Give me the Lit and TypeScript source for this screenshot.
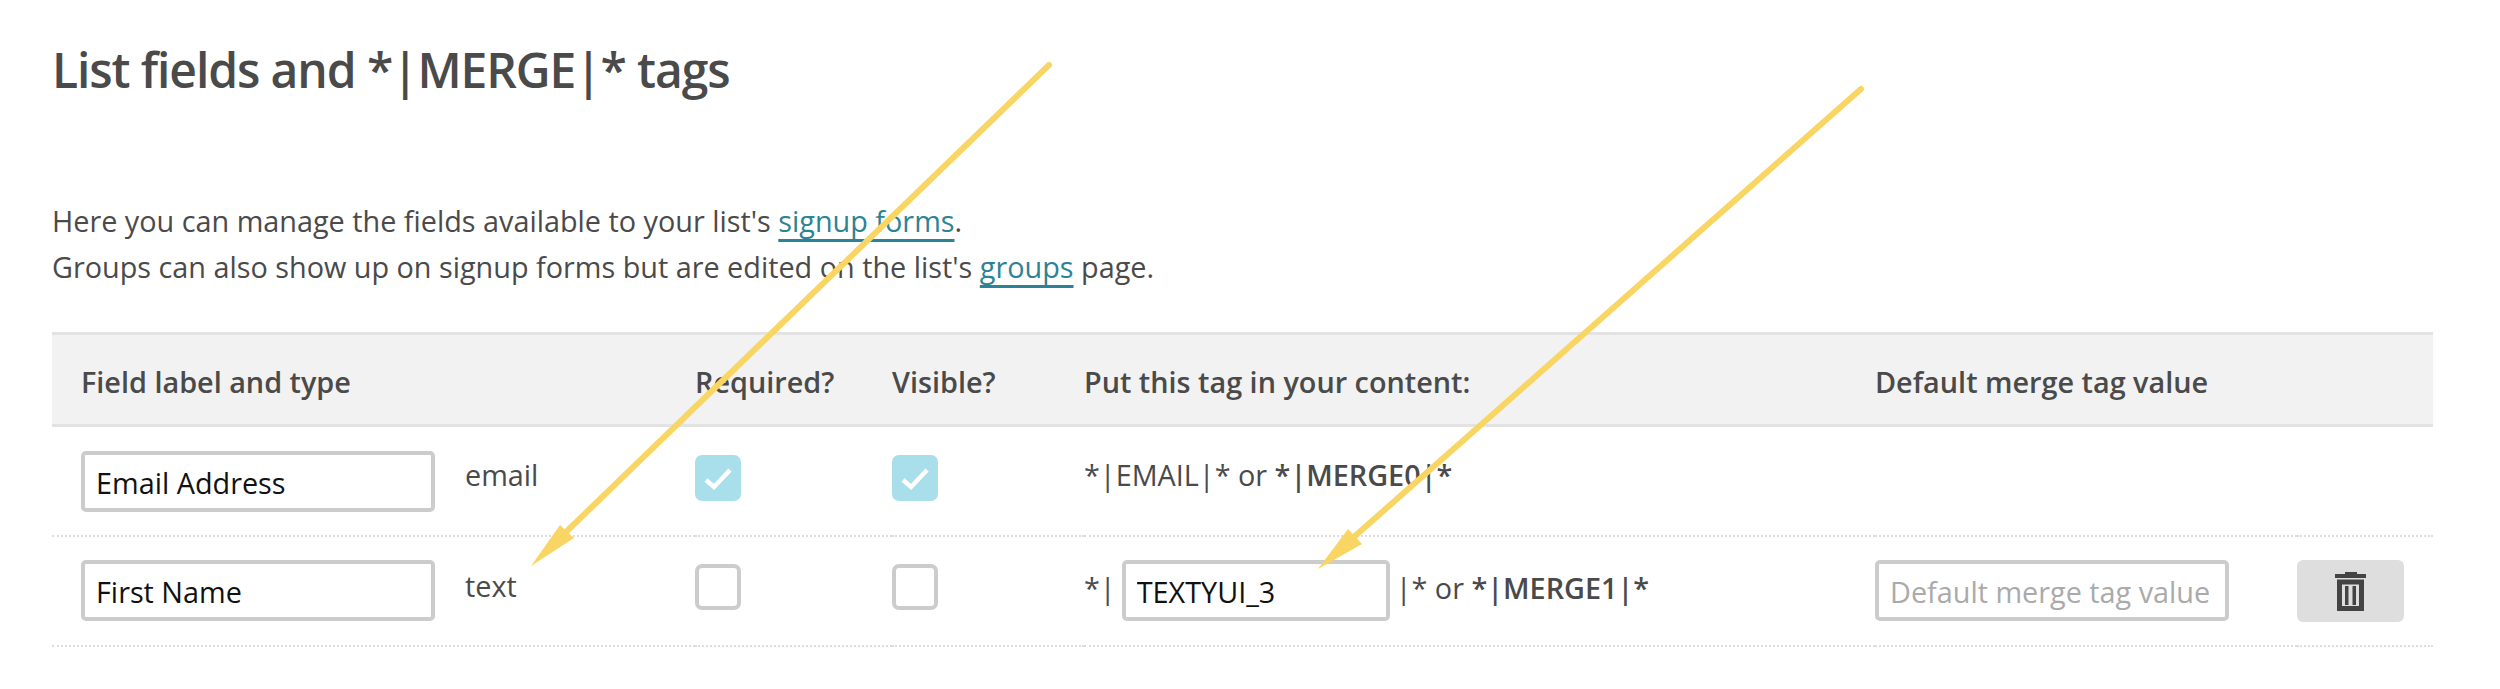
import { LitElement, html, css, svg } from 'lit';
import { customElement } from 'lit/decorators.js';

const CHECK = html`<svg width="46" height="46" viewBox="0 0 46 46"><path d="M11 25l8 7L35 15" fill="none" stroke="#fff" stroke-width="4.5"/></svg>`;

@customElement('app-root')
export class AppRoot extends LitElement {
  static styles = css`
    :host {
      display: block;
      position: relative;
      height: 689px;
      background: #fff;
      color: #4a4a4a;
      font-family: 'Open Sans', sans-serif;
      font-size: 28.8px;
      overflow: hidden;
    }
    .page { padding: 35px 67px 0 52px; }
    h1 { margin: 0; font-size: 48px; line-height: 70px; font-weight: 600; letter-spacing: -1.1px; }
    .intro { margin: 93px 0 0; line-height: 46px; }
    a {
      color: #2c8396;
      text-decoration: underline 3px;
      text-underline-offset: 7px;
      text-decoration-skip-ink: none;
    }
    .table {
      margin-top: 42px;
      display: grid;
      grid-template-columns: 643px 197px 192px 791px 422px 136px;
    }
    .th {
      height: 86px;
      padding-top: 3px;
      display: flex;
      align-items: center;
      background: #f2f2f2;
      border-top: 3px solid #e3e3e3;
      border-bottom: 3px solid #e3e3e3;
      font-weight: 600;
      white-space: nowrap;
    }
    .td {
      box-sizing: border-box;
      height: 110px;
      padding-top: 23px;
      border-bottom: 2px dotted #ddd;
      display: flex;
      align-items: flex-start;
      white-space: nowrap;
    }
    .td.top { padding-top: 24px; }
    .first { padding-left: 29px; }
    input {
      box-sizing: border-box;
      height: 61px;
      border: 4px solid #ccc;
      border-radius: 5px;
      padding: 1px 11px 0;
      font: inherit;
      color: #111;
      background: #fff;
      outline: none;
    }
    input::placeholder { color: #aaa; opacity: 1; }
    .name { width: 354px; margin-right: 30px; }
    .tag { width: 268px; margin: 0 6px; }
    .def { width: 354px; }
    .txt { line-height: 48px; }
    .low { margin-top: 2px; }
    .lower { margin-top: 4px; }
    .box {
      box-sizing: border-box;
      width: 46px;
      height: 46px;
      margin-top: 4px;
      border-radius: 7px;
      border: 4px solid #ccc;
    }
    .box.on { border: 0; background: #a9deeb; }
    .box svg { display: block; }
    b { font-weight: 600; }
    button {
      width: 107px;
      height: 62px;
      border: 0;
      border-radius: 6px;
      background: #dedede;
      padding: 0;
      display: flex;
      align-items: center;
      justify-content: center;
    }
    .arrows { position: absolute; inset: 0; pointer-events: none; }
  `;

  render() {
    return html`
      <div class="page">
        <h1>List fields and *|MERGE|* tags</h1>
        <p class="intro">
          Here you can manage the fields available to your list's <a href="#">signup forms</a>.<br />
          Groups can also show up on signup forms but are edited on the list's <a href="#">groups</a> page.
        </p>
        <div class="table">
          <div class="th first">Field label and type</div>
          <div class="th">Required?</div>
          <div class="th">Visible?</div>
          <div class="th">Put this tag in your content:</div>
          <div class="th">Default merge tag value</div>
          <div class="th"></div>

          <div class="td top first">
            <input class="name" value="Email Address" />
            <span class="txt">email</span>
          </div>
          <div class="td top"><div class="box on">${CHECK}</div></div>
          <div class="td top"><div class="box on">${CHECK}</div></div>
          <div class="td top"><span class="txt">*|EMAIL|* or <b>*|MERGE0|*</b></span></div>
          <div class="td top"></div>
          <div class="td top"></div>

          <div class="td first">
            <input class="name" value="First Name" />
            <span class="txt low">text</span>
          </div>
          <div class="td"><div class="box"></div></div>
          <div class="td"><div class="box"></div></div>
          <div class="td">
            <span class="txt lower">*|</span>
            <input class="tag" value="TEXTYUI_3" />
            <span class="txt lower">|* or <b>*|MERGE1|*</b></span>
          </div>
          <div class="td"><input class="def" placeholder="Default merge tag value" /></div>
          <div class="td">
            <button aria-label="Delete">
              <svg width="31" height="39" viewBox="0 0 31 39" fill="#444">
                <path d="M10 0h12v2H10zM0 2h31v4H0z" />
                <path fill-rule="evenodd" d="M2 7.5h27V39H2zM7 12.5V34h17V12.5z" />
                <path d="M10 14h3.5v19H10zM17.5 14H21v19h-3.5z" />
              </svg>
            </button>
          </div>
        </div>
      </div>
      <svg class="arrows" width="2500" height="689" viewBox="0 0 2500 689">
        ${this.arrow('M1049 65L567 531', 'M531 566L560 525L574 538Z')}
        ${this.arrow('M1861 89L1355 536', 'M1318 569L1348 529L1362 544Z')}
      </svg>
    `;
  }

  arrow(line: string, head: string) {
    return svg`<path d=${line} stroke="#f9d663" stroke-width="6" stroke-linecap="round" fill="none" /><path d=${head} fill="#f9d663" />`;
  }
}
